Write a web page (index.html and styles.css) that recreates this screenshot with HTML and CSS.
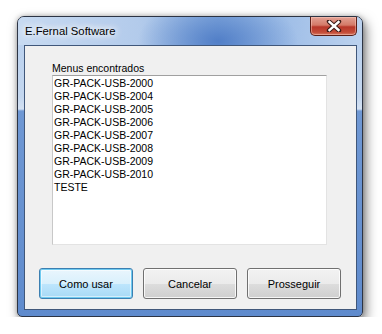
FILE: index.html
```html
<!DOCTYPE html>
<html lang="pt">
<head>
  <meta charset="UTF-8">
  <title>E.Fernal Software</title>
  <link rel="stylesheet" href="styles.css">
</head>
<body>
  <div class="window">
    <div class="titlebar">
      <span class="title">E.Fernal Software</span>
      <button class="close" title="Fechar">
        <svg width="16" height="12" viewBox="0 0 16 12">
          <path d="M3 1.5 L13 10.5 M13 1.5 L3 10.5" stroke="#3a1a16" stroke-width="4.4" stroke-linecap="round" fill="none"/>
          <path d="M3.5 2 L12.5 10 M12.5 2 L3.5 10" stroke="#fff" stroke-width="2.4" stroke-linecap="square" fill="none"/>
        </svg>
      </button>
    </div>
    <div class="client">
      <div class="menus">
        <label for="menuList">Menus encontrados</label>
        <ul class="listbox" id="menuList">
          <li>GR-PACK-USB-2000</li>
          <li>GR-PACK-USB-2004</li>
          <li>GR-PACK-USB-2005</li>
          <li>GR-PACK-USB-2006</li>
          <li>GR-PACK-USB-2007</li>
          <li>GR-PACK-USB-2008</li>
          <li>GR-PACK-USB-2009</li>
          <li>GR-PACK-USB-2010</li>
          <li>TESTE</li>
        </ul>
      </div>
      <div class="buttons">
        <button class="btn default">Como usar</button>
        <button class="btn">Cancelar</button>
        <button class="btn">Prosseguir</button>
      </div>
    </div>
  </div>
</body>
</html>
```

FILE: styles.css
```css
body {
  margin: 0;
  background: #fff;
  font-family: "Liberation Sans", Arial, sans-serif;
}

.window {
  margin: 16px 0 0 17px;
  width: 346px;
  height: 301px;
  box-sizing: border-box;
  border: 1px solid #2c3444;
  border-radius: 7px 7px 5px 5px;
  padding: 0 5px 6px 6px;
  display: flex;
  flex-direction: column;
  background: linear-gradient(to bottom, #b7cfee 0, #c4d7ef 80px, #d4e1f2 92px, #6f98d4 94px, #5f8bcd 100%);
  box-shadow: 3px 5px 12px rgba(0, 0, 0, 0.5), 0 0 5px rgba(0, 0, 0, 0.25);
}

.titlebar {
  height: 28px;
  margin: 0 -5px 0 -6px;
  padding: 0 5px 0 7px;
  display: flex;
  justify-content: space-between;
  align-items: flex-start;
  border-radius: 6px 6px 0 0;
  background:
    radial-gradient(ellipse 80px 45px at 200px 24px, rgba(78, 124, 198, 0.95), rgba(88, 134, 204, 0) 100%),
    linear-gradient(to right, #c7daf1 0, #b3cbeb 35%, #8fb3e2 58%, #a2c0e8 80%, #bcd2ee 100%);
}

.title {
  margin-top: 8px;
  font-size: 11.3px;
  color: #000;
  text-shadow: 0 0 6px #fff, 0 0 8px #fff, 0 0 10px rgba(255, 255, 255, 0.9);
}

.close {
  width: 47px;
  height: 19px;
  padding: 0;
  border: 1px solid #5a1e17;
  border-top: none;
  border-radius: 0 0 5px 5px;
  display: flex;
  align-items: center;
  justify-content: center;
  background: linear-gradient(to bottom, #e3a295 0, #d47a68 45%, #b8372a 55%, #c44c38 85%, #d57c66 100%);
  box-shadow: inset 0 0 0 1px rgba(255, 210, 200, 0.45);
}

.client {
  flex: 1;
  background: #f0f0f0;
  border: 1px solid #40577a;
  display: flex;
  flex-direction: column;
  padding: 16px 0 10px;
}

.menus {
  padding-left: 27px;
}

label {
  display: block;
  font-size: 10.5px;
  line-height: 13px;
  color: #000;
}

.listbox {
  list-style: none;
  margin: 0;
  padding: 1px 0 0 1px;
  width: 275px;
  height: 170px;
  box-sizing: border-box;
  background: #fff;
  border: 1px solid #e3e3e3;
  border-top-color: #a0a0a0;
  border-left-color: #c8c8c8;
  font-size: 10.5px;
  line-height: 13px;
  color: #000;
}

.buttons {
  margin-top: auto;
  padding-left: 14px;
  display: flex;
  gap: 10px;
}

.btn {
  width: 94px;
  height: 31px;
  padding: 0;
  font-family: "Liberation Sans", Arial, sans-serif;
  font-size: 11px;
  color: #000;
  border: 1px solid #707070;
  border-radius: 3px;
  background: linear-gradient(to bottom, #f2f2f2 0, #ebebeb 50%, #dddddd 51%, #cfcfcf 100%);
  box-shadow: inset 0 0 0 1px rgba(255, 255, 255, 0.8);
}

.btn.default {
  border-color: #3c7fb1;
  background: linear-gradient(to bottom, #eaf6fd 0, #d9f0fc 50%, #bee6fd 51%, #a7d9f5 100%);
  box-shadow: inset 0 0 0 1px #6fcaf0, inset 0 0 0 2px rgba(255, 255, 255, 0.5);
}
```
